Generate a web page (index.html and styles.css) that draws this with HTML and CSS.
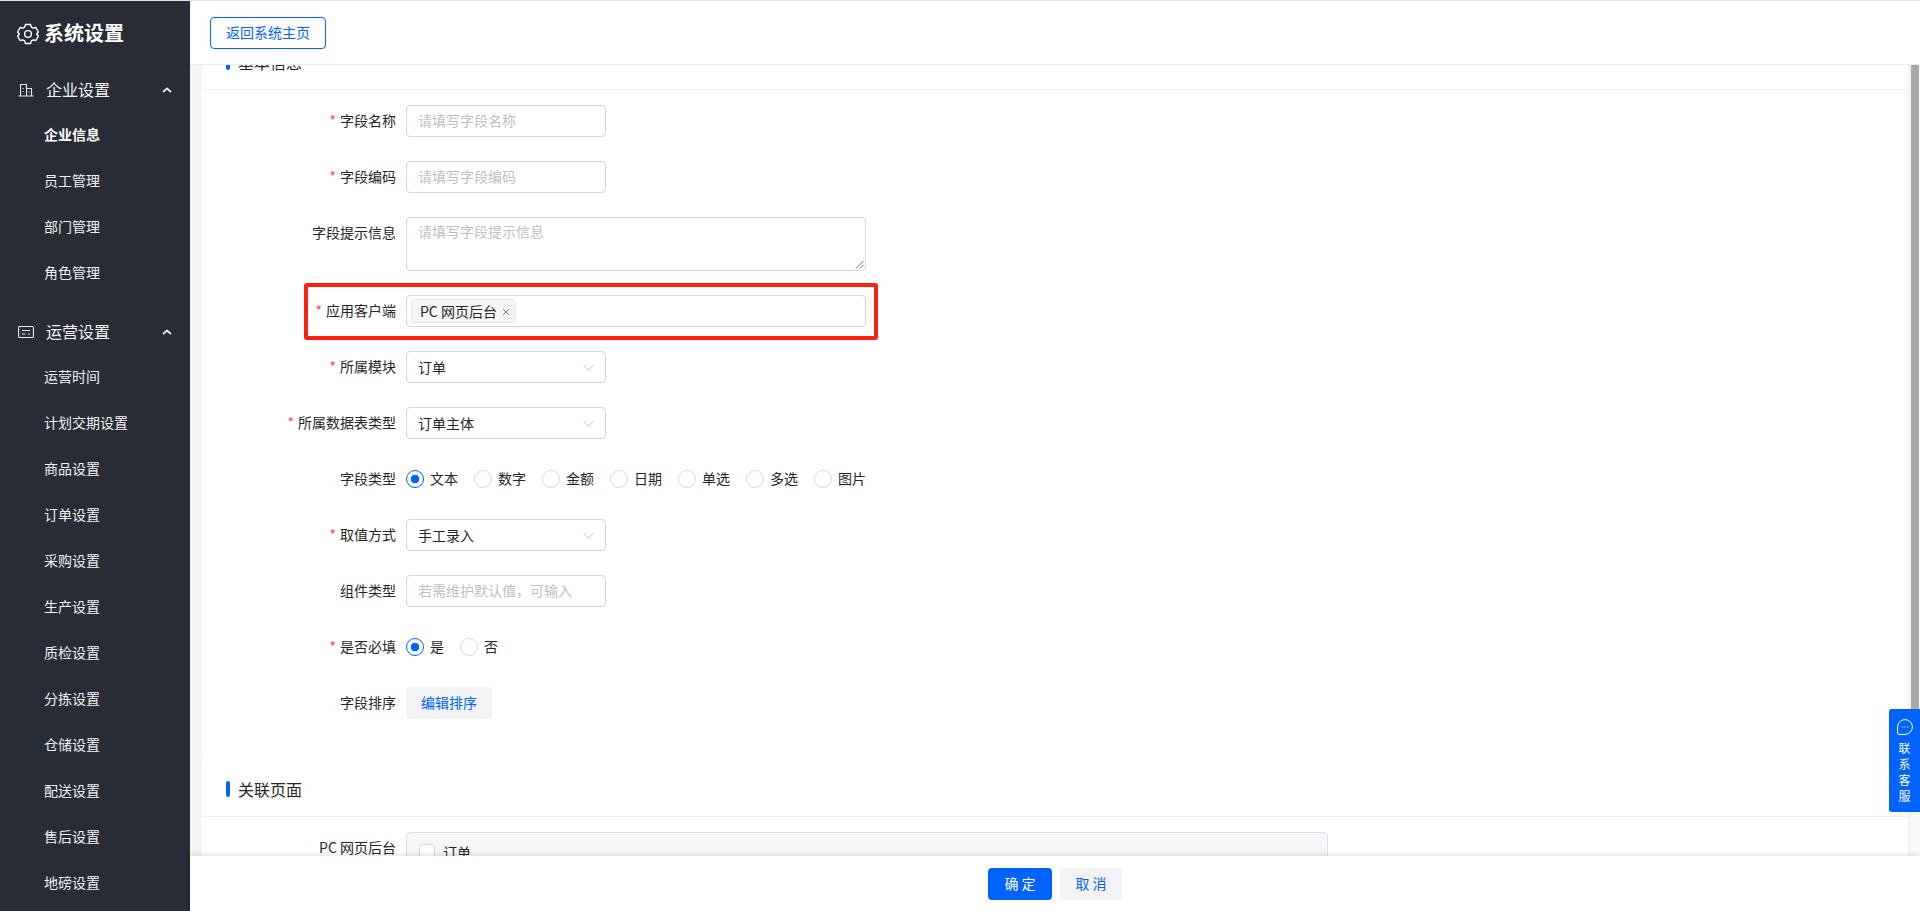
FILE: index.html
```html
<!DOCTYPE html>
<html lang="zh-CN">
<head>
<meta charset="utf-8">
<title>系统设置</title>
<link rel="stylesheet" href="styles.css">
</head>
<body>
<div class="app">
  <aside class="sidebar">
    <div class="brand">
      <svg class="brand-icon" viewBox="0 0 24 24" fill="none" stroke="currentColor" stroke-width="1.500" stroke-linejoin="round"><path d="M9.200 1.600h5.600l.8 2.800 2.200 1.200 2.800-.7 2.800 5-2 2.100 2 2.100-2.800 5-2.800-.7-2.200 1.200-.8 2.800H9.200l-.8-2.800-2.200-1.200-2.800.7-2.800-5 2-2.100-2-2.100 2.800-5 2.800.7 2.200-1.200z"/><circle cx="12" cy="12" r="3.700"/></svg>
      <span class="brand-text">系统设置</span>
    </div>
    <div class="group">
      <svg class="group-icon" viewBox="0 0 16 16" fill="none" stroke="currentColor" stroke-width="1.100"><path d="M2.500 13.500V2.500h6v11M8.500 6.500h5v7M.5 14h15M4.500 6.500h1M4.500 9.500h1M11 9.500v1"/></svg>
      <span class="group-text">企业设置</span>
      <svg class="caret" viewBox="0 0 10 6" fill="none" stroke="currentColor" stroke-width="1.800"><path d="M1 5l4-3.500L9 5"/></svg>
    </div>
    <div class="item active">企业信息</div>
    <div class="item">员工管理</div>
    <div class="item">部门管理</div>
    <div class="item">角色管理</div>
    <div class="group group-next">
      <svg class="group-icon" viewBox="0 0 16 16" fill="none" stroke="currentColor" stroke-width="1.100"><rect x=".6" y="2.500" width="14.800" height="11" rx="1"/><path d="M4 6.500h8M4 10h3.500M10 10h2"/></svg>
      <span class="group-text">运营设置</span>
      <svg class="caret" viewBox="0 0 10 6" fill="none" stroke="currentColor" stroke-width="1.800"><path d="M1 5l4-3.500L9 5"/></svg>
    </div>
    <div class="item">运营时间</div>
    <div class="item">计划交期设置</div>
    <div class="item">商品设置</div>
    <div class="item">订单设置</div>
    <div class="item">采购设置</div>
    <div class="item">生产设置</div>
    <div class="item">质检设置</div>
    <div class="item">分拣设置</div>
    <div class="item">仓储设置</div>
    <div class="item">配送设置</div>
    <div class="item">售后设置</div>
    <div class="item">地磅设置</div>
  </aside>

  <main class="main">
    <header class="topbar"><button class="back-btn">返回系统主页</button></header>
    <div class="body">
      <div class="scroll">
        <section class="card card-first">
          <h2 class="section-title"><i class="section-bar"></i>基本信息</h2>
          <form class="form">
            <div class="row"><label class="label req">字段名称</label><div class="input small placeholder">请填写字段名称</div></div>
            <div class="row"><label class="label req">字段编码</label><div class="input small placeholder">请填写字段编码</div></div>
            <div class="row row-top"><label class="label">字段提示信息</label>
              <div class="input textarea placeholder">请填写字段提示信息
                <svg class="resize" viewBox="0 0 10 10" fill="none" stroke="#666" stroke-width="1"><path d="M1 9.500L9.500 1M5.500 9.500L9.500 5.500"/></svg>
              </div>
            </div>
            <div class="row"><label class="label req">应用客户端</label>
              <div class="input tags"><span class="tag">PC 网页后台<svg class="tag-x" viewBox="0 0 8 8" fill="none" stroke="currentColor" stroke-width="1"><path d="M.8.800l6.400 6.400M7.200.800L.8 7.200"/></svg></span></div>
              <div class="highlight"></div>
            </div>
            <div class="row"><label class="label req">所属模块</label><div class="input small select">订单<svg class="chev" viewBox="0 0 12 7" fill="none" stroke="currentColor" stroke-width="1"><path d="M.5.500L6 6.500 11.500.500"/></svg></div></div>
            <div class="row"><label class="label req">所属数据表类型</label><div class="input small select">订单主体<svg class="chev" viewBox="0 0 12 7" fill="none" stroke="currentColor" stroke-width="1"><path d="M.5.500L6 6.500 11.500.500"/></svg></div></div>
            <div class="row"><label class="label">字段类型</label>
              <div class="radios">
                <span class="radio on">文本</span><span class="radio">数字</span><span class="radio">金额</span><span class="radio">日期</span><span class="radio">单选</span><span class="radio">多选</span><span class="radio">图片</span>
              </div>
            </div>
            <div class="row"><label class="label req">取值方式</label><div class="input small select">手工录入<svg class="chev" viewBox="0 0 12 7" fill="none" stroke="currentColor" stroke-width="1"><path d="M.5.500L6 6.500 11.500.500"/></svg></div></div>
            <div class="row"><label class="label">组件类型</label><div class="input small placeholder">若需维护默认值，可输入</div></div>
            <div class="row"><label class="label req">是否必填</label>
              <div class="radios"><span class="radio on">是</span><span class="radio">否</span></div>
            </div>
            <div class="row"><label class="label">字段排序</label><button type="button" class="soft-btn">编辑排序</button></div>
          </form>
        </section>
        <section class="card card-second">
          <h2 class="section-title"><i class="section-bar"></i>关联页面</h2>
          <div class="form">
            <div class="row row-top"><label class="label">PC 网页后台</label>
              <div class="panel"><span class="check"></span><span class="panel-text">订单</span></div>
            </div>
          </div>
        </section>
      </div>
      <div class="scrollbar"><div class="thumb"></div></div>
      <div class="service">
        <svg class="service-icon" viewBox="0 0 16 16" fill="none" stroke="currentColor" stroke-width="1"><path d="M8 .6a7.400 7.400 0 1 1 0 14.800H1.800a1.200 1.200 0 0 1-1.200-1.200V8A7.400 7.400 0 0 1 8 .6z"/><path d="M4.800 8h.8M7.600 8h.8M10.400 8h.8" stroke-width="1.300"/></svg>
        <span>联</span><span>系</span><span>客</span><span>服</span>
      </div>
    </div>
    <footer class="footer">
      <button class="btn-primary">确 定</button>
      <button class="btn-cancel">取 消</button>
    </footer>
  </main>
</div>
</body>
</html>
```
FILE: styles.css
```css
* { box-sizing: border-box; }
html, body { margin: 0; height: 100%; overflow: hidden; }
body {
  font-family: "Noto Sans CJK SC", "Liberation Sans", sans-serif;
  font-size: 14px;
  color: #262626;
  background: #fff;
}
.app { display: flex; height: 911px; border-top: 1px solid #e4e4e4; }

.sidebar { width: 190px; flex: none; background: #282c37; color: #fff; overflow: hidden; }
.brand { display: flex; align-items: center; height: 55px; margin-top: 5px; padding-left: 17px; }
.brand-icon { width: 22px; height: 22px; margin-right: 5px; flex: none; }
.brand-text { font-size: 20px; font-weight: 700; line-height: 28px; padding-bottom: 1px; }
.group { display: flex; align-items: center; height: 45px; padding-left: 18px; margin-top: 6px; }
.group-next { margin-top: 13px; }
.group-icon { width: 16px; height: 16px; flex: none; margin-right: 12px; color: #e8e8ea; }
.group-text { font-size: 16px; line-height: 22px; flex: 1; color: #f2f2f2; padding-bottom: 2px; }
.caret { width: 10px; height: 6px; margin-right: 18px; color: #e8e8ea; }
.item { height: 46px; line-height: 44px; padding-left: 44px; color: #f0f0f0; font-size: 14px; white-space: nowrap; }
.item.active { font-weight: 700; color: #fff; }

.main { flex: 1; min-width: 0; display: flex; flex-direction: column; }
.topbar { height: 64px; flex: none; padding: 16px 20px 0; background: #fff; border-bottom: 1px solid #e8eaf0; position: relative; z-index: 2; }
.back-btn { display: block; width: 116px; height: 32px; padding: 0 0 2px; font: inherit; color: #0062ff; background: #fff; border: 1px solid #0062ff; border-radius: 4px; }

.body { flex: 1; min-height: 0; display: flex; background: #f5f5f5; position: relative; overflow: hidden; }
.scroll { flex: 1; min-width: 0; padding: 0 0 0 12px; margin-top: -27px; }
.card { background: #fff; border-radius: 4px; }
.card-first { height: 721px; }
.card-second { padding-top: 6px; }
.section-title { display: flex; align-items: center; height: 52px; margin: 0; padding: 0 0 3px 24px; font-size: 16px; font-weight: 400; line-height: 22px; border-bottom: 1px solid #eef0f3; }
.section-bar { width: 4px; height: 16px; margin-right: 8px; background: #0062ff; border-radius: 2px; }
.form { padding: 15px 0 0; }
.row { display: flex; align-items: center; min-height: 32px; margin-bottom: 24px; position: relative; }
.row-top { align-items: flex-start; }
.label { width: 204px; flex: none; padding: 0 10px 2px 0; text-align: right; line-height: 30px; white-space: nowrap; }
.label.req::before { content: "*"; color: #f5484f; margin-right: 4px; }
.input { height: 32px; line-height: 28px; padding: 0 11px; background: #fff; border: 1px solid #d9d9d9; border-radius: 4px; position: relative; }
.small { width: 200px; }
.placeholder { color: #bfbfbf; }
.textarea { width: 460px; height: 54px; line-height: 20px; padding-top: 3px; }
.resize { position: absolute; right: 1px; bottom: 1px; width: 9px; height: 9px; }
.select { display: flex; justify-content: space-between; align-items: center; color: #262626; }
.chev { width: 11px; height: 7px; color: #bfbfbf; }
.tags { width: 460px; display: flex; align-items: center; padding: 0 4px; }
.tag { display: inline-flex; align-items: center; height: 24px; padding: 0 5px 0 8px; background: #f5f5f5; border: 1px solid #e8e8e8; border-radius: 3px; line-height: 20px; }
.tag-x { width: 8px; height: 8px; margin: 2px 0 0 5px; color: #808080; }
.highlight { position: absolute; left: 102px; top: -12px; width: 574px; height: 57px; border: 4px solid #ff1f0f; border-radius: 3px; pointer-events: none; }
.radios { display: flex; gap: 16px; }
.radio { display: inline-flex; align-items: center; line-height: 20px; padding-bottom: 2px; }
.radio::before { content: ""; width: 16px; height: 16px; margin: 2px 6px 0 0; border: 1px solid #d9d9d9; border-radius: 50%; background: #fff; }
.radio.on::before { border-color: #0062ff; background: radial-gradient(circle, #0062ff 0 4px, #fff 4.600px); }
.soft-btn { width: 86px; height: 32px; padding: 0 0 2px; font: inherit; color: #0062ff; background: #f2f3f5; border: 0; border-radius: 4px; }
.panel { width: 922px; height: 200px; padding: 11px 12px; background: #f5f6f8; border: 1px solid #dcdfe6; border-radius: 4px; display: flex; align-items: flex-start; }
.panel-text { line-height: 16px; }
.check { width: 16px; height: 16px; margin-right: 8px; background: #fff; border: 1px solid #d9d9d9; border-radius: 3px; flex: none; }

.scrollbar { width: 12px; flex: none; border-left: 3px solid #f3f3f3; background: #fafafa; }
.thumb { width: 8px; height: 680px; background: #a8a8a8; }
.service { position: absolute; right: 0; top: 644px; width: 31px; height: 103px; padding-top: 10px; display: flex; flex-direction: column; align-items: center; background: #0062ff; color: #fff; border-radius: 3px 0 0 3px; font-size: 12px; line-height: 16px; }
.service-icon { width: 16px; height: 16px; margin-bottom: 5px; flex: none; }

.footer { height: 55px; flex: none; display: flex; justify-content: center; align-items: center; gap: 8px; background: #fff; box-shadow: 0 -2px 5px rgba(0,0,0,.1); position: relative; z-index: 2; }
.btn-primary, .btn-cancel { height: 32px; padding: 0 0 2px; font: inherit; border: 0; border-radius: 4px; }
.btn-primary { width: 64px; background: #0062ff; color: #fff; }
.btn-cancel { width: 62px; background: #f2f3f5; color: #0062ff; }
```
